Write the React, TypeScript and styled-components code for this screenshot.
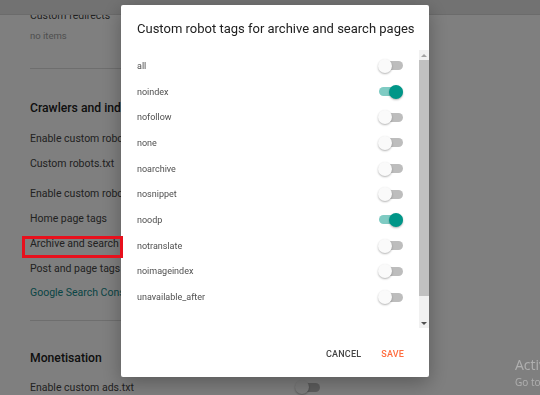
import React from 'react';
import styled, { createGlobalStyle } from 'styled-components';

const GlobalStyle = createGlobalStyle`
  html, body {
    margin: 0;
    padding: 0;
    background: #fff;
    overflow: hidden;
    font-family: Roboto, "Liberation Sans", Arial, sans-serif;
  }
`;

const TopBar = styled.div`
  position: fixed;
  top: 0;
  left: 0;
  right: 0;
  height: 14px;
  background: #e4e4e4;
  border-bottom: 1px solid #d6d6d6;
  z-index: 1;
`;

const Page = styled.div`
  width: 290px;
  padding-left: 30px;
`;

const Label = styled.div<{ $muted?: boolean; $link?: boolean }>`
  font-size: ${(p) => (p.$muted ? '9.5px' : '10.5px')};
  line-height: ${(p) => (p.$muted ? '16px' : '20px')};
  color: ${(p) => (p.$muted ? '#9e9e9e' : p.$link ? '#128a8a' : '#444')};
  white-space: nowrap;
`;

const Divider = styled.hr<{ $top: number }>`
  margin: ${(p) => p.$top}px 0 0;
  border: 0;
  border-top: 1px solid #dcdcdc;
  height: 0;
`;

const Heading = styled.h2<{ $top: number }>`
  margin: ${(p) => p.$top}px 0 0;
  font-size: 12.2px;
  line-height: 20px;
  font-weight: 500;
  color: #212121;
`;

const Group = styled.div<{ $top: number }>`
  margin-top: ${(p) => p.$top}px;
`;

const SettingRow = styled.div`
  height: 25px;
  display: flex;
  align-items: center;
  justify-content: space-between;
  font-size: 10.5px;
  color: #444;
  white-space: nowrap;
`;

const Toggle = styled.span<{ $on?: boolean }>`
  position: relative;
  flex: none;
  width: 25px;
  height: 14px;

  &::before {
    content: '';
    position: absolute;
    left: 1px;
    right: 0;
    top: 2.5px;
    height: 9px;
    border-radius: 5px;
    background: ${(p) => (p.$on ? '#7fcbc3' : '#bdbdbd')};
  }

  &::after {
    content: '';
    position: absolute;
    top: 0;
    left: ${(p) => (p.$on ? '11px' : '0')};
    width: 14px;
    height: 14px;
    border-radius: 50%;
    background: ${(p) => (p.$on ? '#009688' : '#fafafa')};
    box-shadow: 0 1px 2px rgba(0, 0, 0, 0.3);
  }
`;

const Overlay = styled.div`
  position: fixed;
  inset: 0;
  background: rgba(0, 0, 0, 0.5);
  display: flex;
  align-items: flex-start;
  padding: 5px 0 0 121px;
  z-index: 2;
`;

const Dialog = styled.div`
  width: 308px;
  height: 372px;
  background: #fff;
  border-radius: 2px;
  box-shadow: 0 6px 20px rgba(0, 0, 0, 0.3);
  display: flex;
  flex-direction: column;
`;

const Title = styled.h1`
  margin: 14px 16px 0;
  font-size: 13px;
  line-height: 20px;
  font-weight: 400;
  color: #212121;
  white-space: nowrap;
`;

const ListArea = styled.div`
  margin-top: 11px;
  height: 278px;
  display: flex;
`;

const List = styled.div`
  flex: 1;
  padding: 3px 16px 0 16px;
`;

const TagRow = styled.div`
  height: 25.7px;
  display: flex;
  align-items: center;
  justify-content: space-between;
  font-size: 9px;
  color: #4f4f4f;
`;

const Scrollbar = styled.div`
  width: 10px;
  background: #f1f1f1;
  display: flex;
  flex-direction: column;
  align-items: center;
`;

const Arrow = styled.span<{ $down?: boolean }>`
  flex: none;
  height: 10px;
  width: 10px;
  display: flex;
  align-items: center;
  justify-content: center;

  &::after {
    content: '';
    border-left: 3px solid transparent;
    border-right: 3px solid transparent;
    ${(p) => (p.$down ? 'border-top: 3px solid #505050;' : 'border-bottom: 3px solid #a3a3a3;')}
  }
`;

const Thumb = styled.div`
  width: 10px;
  height: 236px;
  background: #c1c1c1;
`;

const Footer = styled.div`
  flex: 1;
  display: flex;
  align-items: center;
  justify-content: flex-end;
  gap: 4px;
  padding: 3px 17px 0 0;
`;

const TextButton = styled.button<{ $accent?: boolean }>`
  border: 0;
  background: none;
  padding: 0 8px;
  font-family: inherit;
  font-size: 9px;
  font-weight: 500;
  letter-spacing: 0.2px;
  line-height: 20px;
  text-transform: uppercase;
  color: ${(p) => (p.$accent ? '#ff6d3f' : '#444')};
`;

const Annotation = styled.div`
  position: fixed;
  left: 22px;
  top: 236px;
  width: 95px;
  height: 16px;
  border: 3px solid #e8101c;
  z-index: 3;
`;

const Watermark = styled.div`
  position: fixed;
  left: 515px;
  top: 355px;
  color: rgba(255, 255, 255, 0.38);
  font-family: "Open Sans", sans-serif;
  white-space: nowrap;
  z-index: 3;

  b {
    display: block;
    font-weight: 400;
    font-size: 14px;
    line-height: 20px;
  }

  span {
    display: block;
    font-size: 10px;
    line-height: 14px;
  }
`;

const tags = [
  { name: 'all', on: false },
  { name: 'noindex', on: true },
  { name: 'nofollow', on: false },
  { name: 'none', on: false },
  { name: 'noarchive', on: false },
  { name: 'nosnippet', on: false },
  { name: 'noodp', on: true },
  { name: 'notranslate', on: false },
  { name: 'noimageindex', on: false },
  { name: 'unavailable_after', on: false }
];

export default function App() {
  return (
    <>
      <GlobalStyle />
      <TopBar />
      <Page>
        <Group $top={6}>
          <Label>Custom redirects</Label>
          <Label $muted style={{ marginTop: 2 }}>no items</Label>
        </Group>
        <Divider $top={24} />
        <Heading $top={29}>Crawlers and indexing</Heading>
        <Group $top={7.5}>
          <SettingRow>
            Enable custom robots.txt <Toggle />
          </SettingRow>
          <SettingRow>Custom robots.txt</SettingRow>
        </Group>
        <Group $top={5}>
          <SettingRow>
            Enable custom robots header tags <Toggle $on />
          </SettingRow>
          <SettingRow>Home page tags</SettingRow>
          <SettingRow>Archive and search page tags</SettingRow>
          <SettingRow>Post and page tags</SettingRow>
          <SettingRow>
            <Label $link>Google Search Console</Label>
          </SettingRow>
        </Group>
        <Divider $top={14.5} />
        <Heading $top={27}>Monetisation</Heading>
        <Group $top={6.5}>
          <SettingRow>
            Enable custom ads.txt <Toggle />
          </SettingRow>
        </Group>
      </Page>

      <Overlay>
        <Dialog>
          <Title>Custom robot tags for archive and search pages</Title>
          <ListArea>
            <List>
              {tags.map((t) => (
                <TagRow key={t.name}>
                  {t.name}
                  <Toggle $on={t.on} />
                </TagRow>
              ))}
            </List>
            <Scrollbar>
              <Arrow />
              <Thumb />
              <div style={{ flex: 1 }} />
              <Arrow $down />
            </Scrollbar>
          </ListArea>
          <Footer>
            <TextButton>Cancel</TextButton>
            <TextButton $accent>Save</TextButton>
          </Footer>
        </Dialog>
      </Overlay>

      <Annotation />
      <Watermark>
        <b>Activate Windows</b>
        <span>Go to Settings to activate Windows.</span>
      </Watermark>
    </>
  );
}
